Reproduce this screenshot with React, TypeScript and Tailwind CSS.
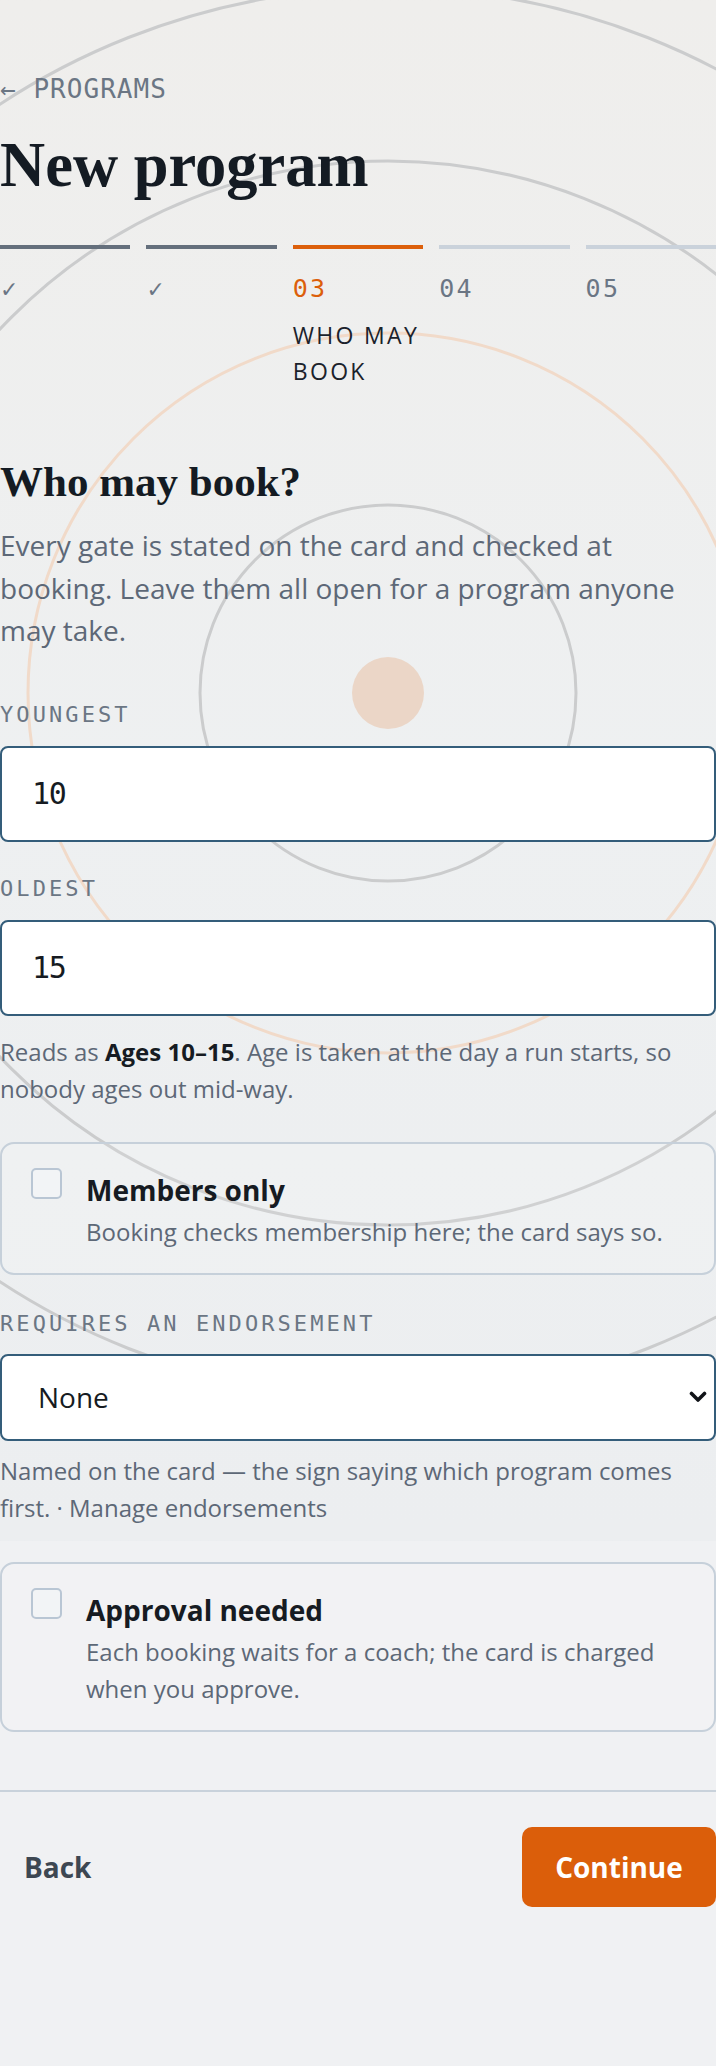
import React from 'react';

type StepState = 'done' | 'current' | 'todo';

type Step = {
  num: string;
  state: StepState;
  label?: string;
};

const steps: Step[] = [
  { num: '01', state: 'done' },
  { num: '02', state: 'done' },
  { num: '03', state: 'current', label: 'Who may book' },
  { num: '04', state: 'todo' },
  { num: '05', state: 'todo' },
];

const barColor: Record<StepState, string> = {
  done: 'bg-[#646f7c]',
  current: 'bg-[#dc5f0b]',
  todo: 'bg-[#cad2db]',
};

const Backdrop: React.FC = () => (
  <div className="absolute inset-x-0 top-0 h-[1541px] bg-linear-to-b from-[#efeeec] via-[#eef0f1] to-[#eceef0]">
    <svg width="716" height="1541" viewBox="0 0 716 1541" fill="none" className="block">
      <circle cx="388" cy="693" r="705" stroke="#cbcccd" strokeWidth="3" />
      <circle cx="388" cy="693" r="532" stroke="#cbcccd" strokeWidth="3" />
      <circle cx="388" cy="693" r="360" stroke="#f1dac9" strokeWidth="3" />
      <circle cx="388" cy="693" r="188" stroke="#cbcccd" strokeWidth="3" />
      <circle cx="388" cy="693" r="36" fill="#ebd6c7" />
    </svg>
  </div>
);

const FieldLabel: React.FC<{ children: React.ReactNode; className?: string }> = ({ children, className }) => (
  <div
    className={`font-['DejaVu_Sans_Mono',monospace] text-[22px] leading-[30px] tracking-[0.14em] uppercase text-[#6b7684] ${className ?? ''}`}
  >
    {children}
  </div>
);

const NumberInput: React.FC<{ value: string }> = ({ value }) => (
  <div className="mt-[16px] flex h-[96px] w-full items-center rounded-[8px] border-2 border-[#345d7a] bg-white px-[30px]">
    <input
      type="text"
      defaultValue={value}
      className="h-[40px] w-full bg-transparent font-['DejaVu_Sans_Mono',monospace] text-[30px] leading-[40px] tracking-[-0.04em] text-[#161b22] outline-none"
    />
  </div>
);

type OptionCardProps = {
  title: string;
  description: string;
  className?: string;
};

const OptionCard: React.FC<OptionCardProps> = ({ title, description, className }) => (
  <div
    className={`flex gap-[24px] rounded-[14px] border-2 border-[#c6d0da] bg-white/10 pt-[24px] pb-[23px] pl-[29px] pr-[29px] ${className ?? ''}`}
  >
    <span className="block h-[31px] w-[31px] shrink-0 rounded-[5px] border-2 border-[#b9c6d4] bg-[#f2f4f6]" />
    <div className="min-w-0">
      <div className="mt-[4px] text-[28px] leading-[36px] font-bold text-[#161b22]">{title}</div>
      <div className="mt-[5px] text-[24px] leading-[37px] text-[#5d6877]">{description}</div>
    </div>
  </div>
);

export default function App() {
  return (
    <div className="relative min-h-[2066px] w-full overflow-hidden bg-[#f0f1f3] font-['Open_Sans',sans-serif]">
      <Backdrop />

      <main className="relative w-[716px] pt-[69px]">
        <a className="block font-['DejaVu_Sans_Mono',monospace] text-[26px] leading-[40px] tracking-[0.04em] text-[#6b7684]">
          ← PROGRAMS
        </a>

        <h1 className="mt-[22px] font-['Liberation_Serif',serif] text-[62.5px] leading-[69px] font-bold text-[#141b23]">
          New program
        </h1>

        <ol className="mt-[45px] grid grid-cols-5 gap-x-[16px]">
          {steps.map((s) => (
            <li key={s.num}>
              <div className={`h-[4px] ${barColor[s.state]}`} />
              <div
                className={`mt-[22px] h-[36px] font-['DejaVu_Sans_Mono',monospace] text-[25px] leading-[36px] tracking-[0.09em] ${
                  s.state === 'current' ? 'text-[#dc5f0b]' : 'text-[#6b7684]'
                }`}
              >
                {s.state === 'done' ? <span className="font-['DejaVu_Sans',sans-serif] text-[22px]">✓</span> : s.num}
              </div>
              {s.label && (
                <div className="mt-[10px] text-[23px] leading-[36px] tracking-[0.1em] uppercase text-[#1b222b]">
                  {s.label}
                </div>
              )}
            </li>
          ))}
        </ol>

        <h2 className="mt-[67px] font-['Liberation_Serif',serif] text-[43px] leading-[52px] font-bold text-[#141b23]">
          Who may book?
        </h2>
        <p className="mt-[16px] text-[28px] leading-[42.5px] text-[#5d6877]">
          Every gate is stated on the card and checked at booking. Leave them all open for a program anyone may take.
        </p>

        <FieldLabel className="mt-[48px]">Youngest</FieldLabel>
        <NumberInput value="10" />

        <FieldLabel className="mt-[32px]">Oldest</FieldLabel>
        <NumberInput value="15" />

        <p className="mt-[17px] text-[24px] leading-[37px] text-[#5d6877]">
          Reads as <strong className="font-bold text-[#161b22]">Ages 10–15</strong>. Age is taken at the day a run
          starts, so nobody ages out mid-way.
        </p>

        <OptionCard
          className="mt-[35px]"
          title="Members only"
          description="Booking checks membership here; the card says so."
        />

        <FieldLabel className="mt-[34px]">Requires an endorsement</FieldLabel>
        <div className="relative mt-[15px]">
          <select className="block h-[87px] w-full appearance-none rounded-[8px] border-2 border-[#345d7a] bg-white pl-[36px] text-[28px] text-[#161b22] outline-none">
            <option>None</option>
          </select>
          <svg
            className="pointer-events-none absolute right-[9px] top-1/2 -translate-y-1/2"
            width="18"
            height="12"
            viewBox="0 0 18 12"
            fill="none"
          >
            <path d="M2.5 2.5 L9 9 L15.5 2.5" stroke="#111418" strokeWidth="3.6" strokeLinecap="round" strokeLinejoin="round" />
          </svg>
        </div>
        <p className="mt-[11px] text-[24px] leading-[37.5px] text-[#5d6877]">
          Named on the card — the sign saying which program comes first. · <a>Manage endorsements</a>
        </p>

        <OptionCard
          className="mt-[35px]"
          title="Approval needed"
          description="Each booking waits for a coach; the card is charged when you approve."
        />

        <div className="mt-[58px] border-t-2 border-[#c9d2db]" />

        <div className="mt-[35px] flex items-center justify-between">
          <button className="h-[80px] px-[24px] text-[28px] font-bold text-[#3d4752]">Back</button>
          <button className="h-[80px] w-[194px] rounded-[10px] bg-[#db5e0a] text-[28px] font-bold text-white">
            Continue
          </button>
        </div>
      </main>
    </div>
  );
}
